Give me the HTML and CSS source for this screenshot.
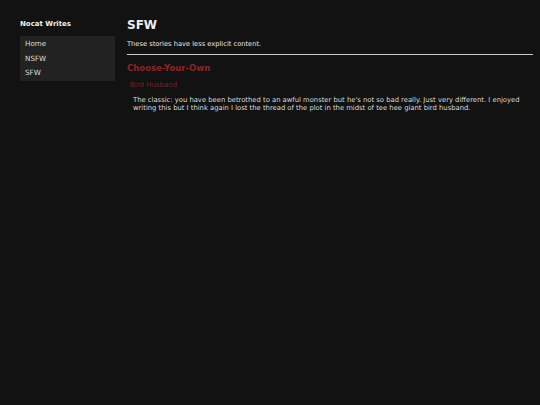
FILE: index.html
```html
<!DOCTYPE html>
<html lang="en">
<head>
    <meta charset="UTF-8">
    <meta name="viewport" content="width=device-width, initial-scale=1.0">
    <title>SFW - Nocat Writes</title>
    <link rel="stylesheet" href="styles.css">
</head>
<body>

    <div class="page">
        <!-- Sidebar -->
        <div class="sidebar">
            <h3 class="site-title">Nocat Writes</h3>
            <div class="nav">
                <a href="#">Home</a>
                <a href="#">NSFW</a>
                <a href="#">SFW</a>
            </div>
        </div>

        <!-- Main Content -->
        <div class="main-content">
            <h1 class="page-title">SFW</h1>
            <p class="intro">These stories have less explicit content.</p>
            <hr>

            <h2 class="category">Choose-Your-Own</h2>
            <div class="story">
                <a class="story-title" href="#">Bird Husband</a>
                <p class="story-blurb">The classic: you have been betrothed to an awful monster but he's not so bad really. Just very different. I enjoyed writing this but I think again I lost the thread of the plot in the midst of tee hee giant bird husband.</p>
            </div>
        </div>
    </div>

</body>
</html>
```

FILE: styles.css
```css
* {
    margin: 0;
    padding: 0;
    box-sizing: border-box;
    font-family: "DejaVu Sans", Verdana, sans-serif;
}

body {
    background-color: #121212;
    color: #e6e6e6;
    height: 100vh;
}

a {
    text-decoration: none;
}

/* Main Layout */
.page {
    display: flex;
    gap: 12px;
    padding: 18px 7px 0 20px;
}

.sidebar {
    width: 95px;
    flex-shrink: 0;
    padding-top: 2px;
}

.site-title {
    font-size: 7px;
    font-weight: bold;
    color: #eeeeee;
    margin-bottom: 8px;
}

.nav {
    display: flex;
    flex-direction: column;
    background-color: #222222;
    padding: 1px 5px 0;
}

.nav a {
    color: #dddddd;
    font-size: 7.2px;
    line-height: 14.5px;
}

.main-content {
    flex-grow: 1;
}

.page-title {
    font-size: 12px;
    font-weight: bold;
    color: #eeeeee;
    margin-bottom: 8px;
}

.intro {
    font-size: 6.7px;
    margin-bottom: 6px;
}

hr {
    border: none;
    border-top: 1px solid #cccccc;
    margin-bottom: 8px;
}

.category {
    font-size: 8.5px;
    font-weight: bold;
    color: #8b2626;
    margin-bottom: 8px;
}

.story {
    padding-left: 3px;
}

.story-title {
    display: block;
    font-size: 7px;
    color: #7a2020;
    margin-bottom: 7px;
}

.story-blurb {
    font-size: 6.8px;
    line-height: 8px;
    padding-left: 3px;
    color: #dddddd;
}
```
